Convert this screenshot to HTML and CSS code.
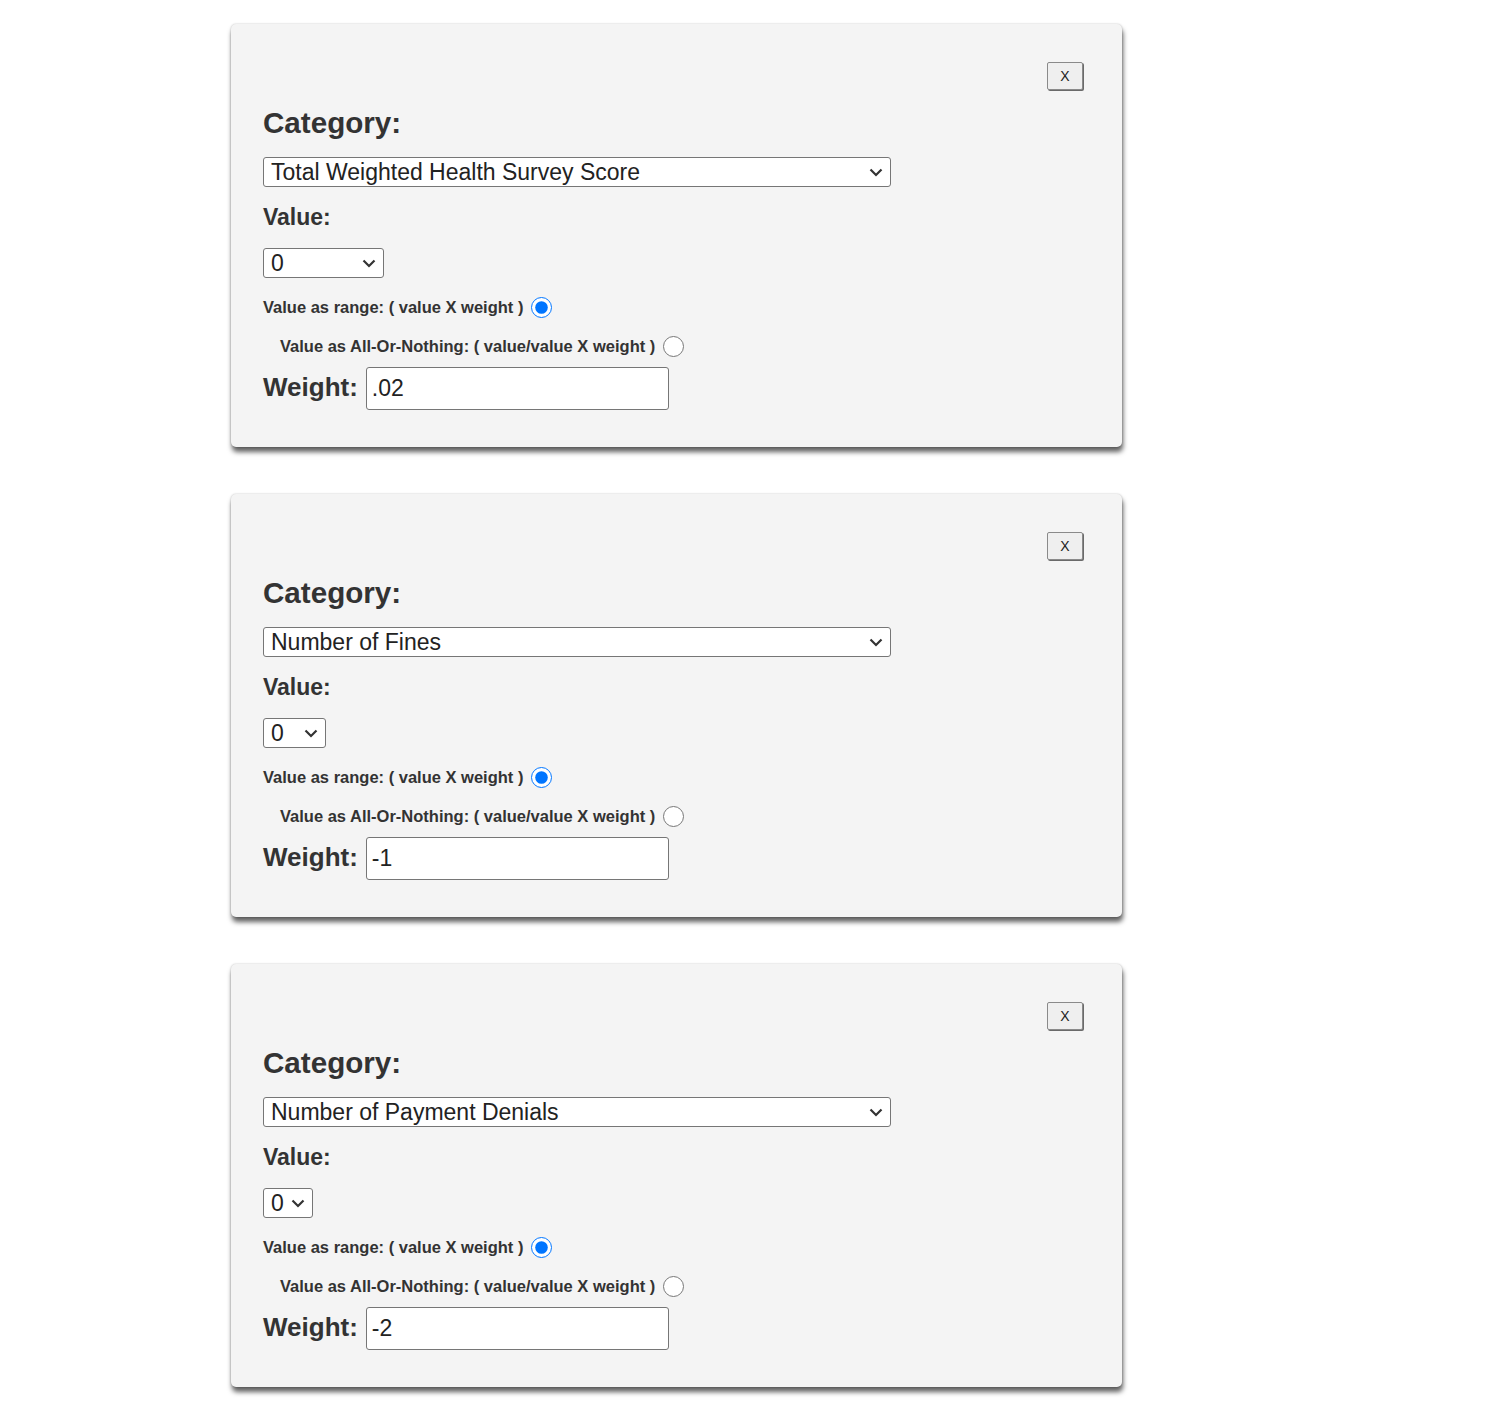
FILE: index.html
```html
<!DOCTYPE html>
<html>
<head>
<meta charset="utf-8">
<link rel="stylesheet" href="styles.css">
</head>
<body>
<div class="list">
  <div class="card">
    <div class="close-row"><button class="close">X</button></div>
    <h2 class="cat-label">Category:</h2>
    <div class="select-wrap cat-wrap">
      <select class="select"><option>Total Weighted Health Survey Score</option></select>
      <svg class="chev" width="14" height="9" viewBox="0 0 14 9"><path d="M1.5 1.5 L7 7 L12.5 1.5" fill="none" stroke="#333" stroke-width="2.2"/></svg>
    </div>
    <h3 class="val-label">Value:</h3>
    <div class="select-wrap" style="width:121px">
      <select class="select"><option>0</option></select>
      <svg class="chev" width="14" height="9" viewBox="0 0 14 9"><path d="M1.5 1.5 L7 7 L12.5 1.5" fill="none" stroke="#333" stroke-width="2.2"/></svg>
    </div>
    <label class="radio-row">Value as range: ( value X weight ) <input type="radio" name="r1" checked></label>
    <label class="radio-row indent">Value as All-Or-Nothing: ( value/value X weight ) <input type="radio" name="r1"></label>
    <div class="weight-row"><span class="weight-label">Weight:</span><input class="weight-input" type="text" value=".02"></div>
  </div>
  <div class="card">
    <div class="close-row"><button class="close">X</button></div>
    <h2 class="cat-label">Category:</h2>
    <div class="select-wrap cat-wrap">
      <select class="select"><option>Number of Fines</option></select>
      <svg class="chev" width="14" height="9" viewBox="0 0 14 9"><path d="M1.5 1.5 L7 7 L12.5 1.5" fill="none" stroke="#333" stroke-width="2.2"/></svg>
    </div>
    <h3 class="val-label">Value:</h3>
    <div class="select-wrap" style="width:63px">
      <select class="select"><option>0</option></select>
      <svg class="chev" width="14" height="9" viewBox="0 0 14 9"><path d="M1.5 1.5 L7 7 L12.5 1.5" fill="none" stroke="#333" stroke-width="2.2"/></svg>
    </div>
    <label class="radio-row">Value as range: ( value X weight ) <input type="radio" name="r2" checked></label>
    <label class="radio-row indent">Value as All-Or-Nothing: ( value/value X weight ) <input type="radio" name="r2"></label>
    <div class="weight-row"><span class="weight-label">Weight:</span><input class="weight-input" type="text" value="-1"></div>
  </div>
  <div class="card">
    <div class="close-row"><button class="close">X</button></div>
    <h2 class="cat-label">Category:</h2>
    <div class="select-wrap cat-wrap">
      <select class="select"><option>Number of Payment Denials</option></select>
      <svg class="chev" width="14" height="9" viewBox="0 0 14 9"><path d="M1.5 1.5 L7 7 L12.5 1.5" fill="none" stroke="#333" stroke-width="2.2"/></svg>
    </div>
    <h3 class="val-label">Value:</h3>
    <div class="select-wrap" style="width:50px">
      <select class="select"><option>0</option></select>
      <svg class="chev" width="14" height="9" viewBox="0 0 14 9"><path d="M1.5 1.5 L7 7 L12.5 1.5" fill="none" stroke="#333" stroke-width="2.2"/></svg>
    </div>
    <label class="radio-row">Value as range: ( value X weight ) <input type="radio" name="r3" checked></label>
    <label class="radio-row indent">Value as All-Or-Nothing: ( value/value X weight ) <input type="radio" name="r3"></label>
    <div class="weight-row"><span class="weight-label">Weight:</span><input class="weight-input" type="text" value="-2"></div>
  </div>
</div>
</body>
</html>
```

FILE: styles.css
```css
html, body {
  margin: 0;
  padding: 0;
  background: #ffffff;
}
body {
  font-family: "Liberation Sans", Arial, sans-serif;
  color: #333333;
}
.list {
  padding: 24px 0 29px 231px;
  display: flex;
  flex-direction: column;
  gap: 47px;
}
.card {
  width: 891px;
  box-sizing: border-box;
  height: 423px;
  background: #f4f4f4;
  border-radius: 5px;
  padding: 38px 39px 0 32px;
  box-shadow: 1px 5px 5px rgba(0, 0, 0, 0.62), 0 0 2px rgba(0, 0, 0, 0.25);
  display: flex;
  flex-direction: column;
  align-items: flex-start;
}
.close-row {
  align-self: stretch;
  display: flex;
  justify-content: flex-end;
}
.close {
  width: 36px;
  height: 28px;
  padding: 0;
  font-family: "Liberation Sans", Arial, sans-serif;
  font-size: 14px;
  color: #222;
  background: #efefef;
  border: 1px solid #8a8a8a;
  border-radius: 2px;
  box-shadow: 1px 1px 0 #6a6a6a;
}
.cat-label {
  margin: 16px 0 0 0;
  font-size: 29.6px;
  line-height: 34px;
  font-weight: bold;
}
.select-wrap {
  position: relative;
  height: 30px;
  margin-top: 18px;
}
.cat-wrap {
  width: 628px;
  margin-top: 17px;
}
.select {
  -webkit-appearance: none;
  appearance: none;
  display: block;
  width: 100%;
  height: 30px;
  box-sizing: border-box;
  padding: 0 0 0 7px;
  font-family: "Liberation Sans", Arial, sans-serif;
  font-size: 23px;
  color: #222;
  background: #ffffff;
  border: 1px solid #767676;
  border-radius: 3px;
}
.chev {
  position: absolute;
  right: 8px;
  top: 11px;
  pointer-events: none;
}
.val-label {
  margin: 17px 0 0 0;
  font-size: 23px;
  line-height: 26px;
  font-weight: bold;
}
.radio-row {
  display: flex;
  align-items: center;
  height: 24px;
  font-size: 16.5px;
  font-weight: bold;
  margin-top: 17px;
  white-space: pre;
}
.radio-row + .radio-row {
  margin-top: 15px;
}
.radio-row.indent {
  margin-left: 17px;
}
.radio-row input {
  width: 21px;
  height: 21px;
  margin: 0 0 0 3px;
}
.weight-row {
  display: flex;
  align-items: baseline;
  margin-top: 9px;
}
.weight-label {
  font-size: 26px;
  font-weight: bold;
  margin-right: 8px;
}
.weight-input {
  width: 303px;
  height: 43px;
  box-sizing: border-box;
  padding: 0 5px;
  font-family: "Liberation Sans", Arial, sans-serif;
  font-size: 23px;
  color: #222;
  background: #fff;
  border: 1px solid #767676;
  border-radius: 3px;
}
```
